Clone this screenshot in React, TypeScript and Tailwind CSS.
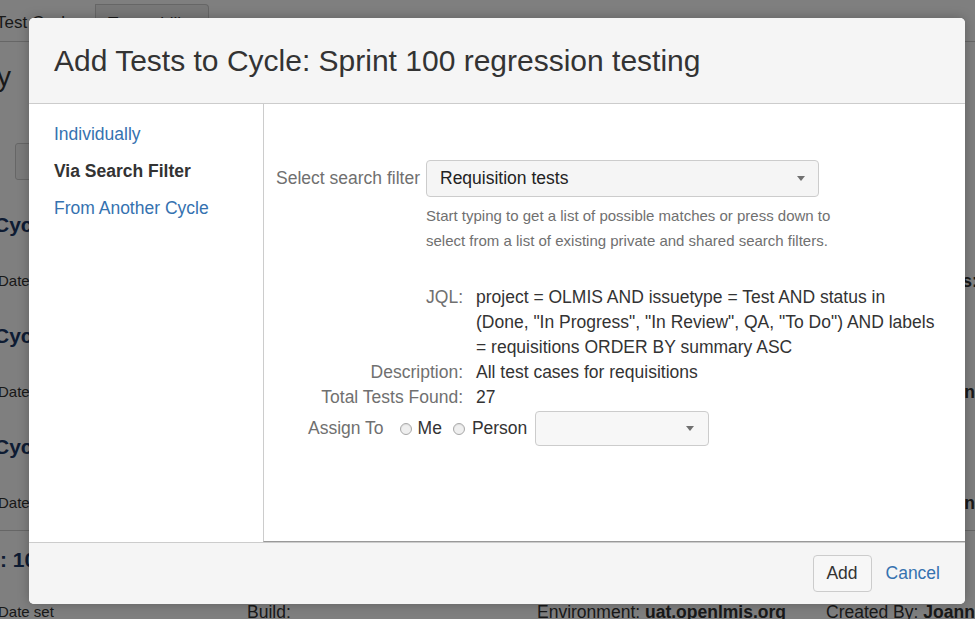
import React from "react";

function Caret() {
  return (
    <span className="block w-0 h-0 border-x-[4.5px] border-x-transparent border-t-[5px] border-t-[#707070]" />
  );
}

function Radio() {
  return (
    <span className="block w-[12px] h-[12px] rounded-full border border-[#a8a8a8] bg-[#efefef] shadow-[inset_0_1px_1px_rgba(0,0,0,0.08)]" />
  );
}

function DataRow({ last }: { last: React.ReactNode }) {
  return (
    <div className="flex h-[20px] items-center text-[17.5px] leading-[20px] text-[#333] whitespace-nowrap -ml-[11px]">
      <div className="w-[258px] shrink-0 pl-[9px] text-[15px]">Date set</div>
      <div className="w-[290px] shrink-0">Build:</div>
      <div className="w-[289px] shrink-0">
        Environment: <span className="font-bold">uat.openlmis.org</span>
      </div>
      <div className="flex-1 min-w-0">{last}</div>
    </div>
  );
}

function CycleBlock({ title, last }: { title: string; last: React.ReactNode }) {
  return (
    <div className="pt-[30px]">
      <div className="h-[30px] leading-[30px] text-[21px] font-bold text-[#1c3866] whitespace-nowrap -ml-[6px]">
        {title}
      </div>
      <div className="mt-[31px]">
        <DataRow last={last} />
      </div>
    </div>
  );
}

function BackgroundPage() {
  const createdBy = (
    <span>
      Created By: <span className="font-bold">Joanna Bowers</span>
    </span>
  );
  return (
    <div className="w-[975px] h-[619px] overflow-hidden bg-white text-[#333]">
      <div className="h-[4px]" />
      <div className="flex h-[38px] border-b border-[#cccccc] text-[17px] leading-[37px] whitespace-nowrap">
        <div className="w-[95px] bg-white overflow-hidden">
          <span className="block -ml-[4px]">Test Cycles</span>
        </div>
        <div className="w-[114px] bg-[#f0f0f0] border border-b-0 border-[#cccccc] rounded-tr-[4px] pl-[12px]">
          Traceability
        </div>
      </div>
      <div className="mt-[19px] h-[32px] flex justify-end w-[11px] text-[28px] leading-[32px] whitespace-nowrap">
        <span>Cycle Summary</span>
      </div>
      <div className="mt-[50px] h-[37px] ml-[15px] w-[130px] border border-[#cccccc] rounded-[3px] bg-[#f5f5f5] flex items-center pl-[24px] text-[14px] whitespace-nowrap">
        Create New Cycle
      </div>
      <CycleBlock
        title="Cycle: Sprint 98 regression testing"
        last={
          <div className="flex justify-between">
            <span>Created By:</span>
            <span className="font-bold">Status:</span>
          </div>
        }
      />
      <CycleBlock title="Cycle: Sprint 99 regression testing" last={createdBy} />
      <CycleBlock title="Cycle: Sprint 97 regression testing" last={createdBy} />
      <div className="mt-[17px] border-t border-[#cccccc]" />
      <div className="mt-[14px] h-[30px] leading-[30px] text-[21px] font-bold text-[#1c3866] whitespace-nowrap -ml-[56px]">
        Cycle: 100 regression testing
      </div>
      <div className="mt-[27px]">
        <DataRow last={createdBy} />
      </div>
    </div>
  );
}

function Dialog() {
  return (
    <div className="absolute left-[29px] top-[18px] w-[936px] h-[586px] bg-white rounded-[5px] overflow-hidden flex flex-col shadow-[0_0_12px_rgba(0,0,0,0.25)]">
      <div className="h-[86px] shrink-0 bg-[#f5f5f5] border-b border-[#cccccc] pl-[25px] flex items-center">
        <h2 className="text-[30px] leading-[36px] font-normal text-[#333] whitespace-nowrap">
          Add Tests to Cycle: Sprint 100 regression testing
        </h2>
      </div>
      <div className="flex flex-1 min-h-0">
        <nav className="w-[234px] shrink-0 pt-[12px] pl-[25px] text-[17.5px] whitespace-nowrap">
          <div className="h-[37px] flex items-center text-[#3572b0]">Individually</div>
          <div className="h-[37px] flex items-center font-bold text-[#333]">Via Search Filter</div>
          <div className="h-[36px] flex items-center text-[#3572b0]">From Another Cycle</div>
        </nav>
        <div className="flex-1 border-l border-[#cccccc] border-b border-b-[#999999] pt-[56px] pl-[12px] text-[17.5px] text-[#333]">
          <div className="grid grid-cols-[150px_auto]">
            <div className="h-[37px] flex items-center justify-end pr-[6px] text-[#707070] whitespace-nowrap">
              Select search filter
            </div>
            <div className="w-[393px] h-[37px] border border-[#cccccc] rounded-[4px] bg-[#f5f5f5] flex items-center justify-between pl-[13px] pr-[13px] text-[#222]">
              <span>Requisition tests</span>
              <Caret />
            </div>
            <div />
            <div className="mt-[6px] text-[15px] leading-[25px] text-[#707070] whitespace-nowrap">
              Start typing to get a list of possible matches or press down to
              <br />
              select from a list of existing private and shared search filters.
            </div>
          </div>
          <div className="mt-[32px] grid grid-cols-[187px_auto] gap-x-[13px] leading-[25px] whitespace-nowrap">
            <div className="text-right text-[#707070]">JQL:</div>
            <div>
              project = OLMIS AND issuetype = Test AND status in
              <br />
              (Done, "In Progress", "In Review", QA, "To Do") AND labels
              <br />= requisitions ORDER BY summary ASC
            </div>
            <div className="text-right text-[#707070]">Description:</div>
            <div>All test cases for requisitions</div>
            <div className="text-right text-[#707070]">Total Tests Found:</div>
            <div>27</div>
          </div>
          <div className="mt-[1px] ml-[32px] h-[35px] flex items-center whitespace-nowrap">
            <span className="text-[#707070]">Assign To</span>
            <span className="ml-[16px]">
              <Radio />
            </span>
            <span className="ml-[6px]">Me</span>
            <span className="ml-[11px]">
              <Radio />
            </span>
            <span className="ml-[7px]">Person</span>
            <div className="ml-[8px] w-[174px] h-[35px] border border-[#cccccc] rounded-[4px] bg-[#f7f7f7] flex items-center justify-end pr-[14px]">
              <Caret />
            </div>
          </div>
        </div>
      </div>
      <div className="h-[62px] shrink-0 bg-[#f5f5f5] border-t border-[#cccccc] flex items-center justify-end pr-[25px] text-[17.5px]">
        <button className="w-[59px] h-[37px] border border-[#cccccc] rounded-[4px] bg-[#f7f7f7] text-[#333] flex items-center justify-center">
          Add
        </button>
        <span className="ml-[14px] text-[#3572b0]">Cancel</span>
      </div>
    </div>
  );
}

export default function App() {
  return (
    <div className="relative w-[975px] h-[619px] overflow-hidden bg-white text-[#333] font-['Liberation_Sans',Arial,sans-serif]">
      <BackgroundPage />
      <div className="absolute inset-0 bg-black/50" />
      <Dialog />
    </div>
  );
}
